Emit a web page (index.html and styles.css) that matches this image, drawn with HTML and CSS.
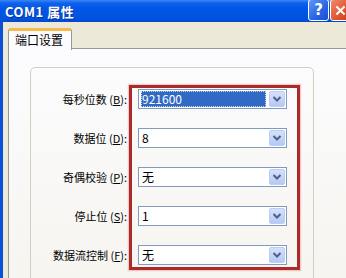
FILE: index.html
```
<!DOCTYPE html>
<html lang="zh-CN">
<head>
    <meta charset="UTF-8">
    <meta name="viewport" content="width=device-width, initial-scale=1.0">
    <title>COM1 属性</title>
    <link rel="stylesheet" href="styles.css">
</head>
<body>
    <div class="window">
        <!-- Title bar -->
        <div class="titlebar">
            <span class="title">COM1 属性</span>
            <div class="title-buttons">
                <span class="tbtn help">?</span>
                <span class="tbtn close">
                    <svg width="21" height="21" viewBox="0 0 21 21"><path d="M6 6 L15 15 M15 6 L6 15" stroke="#fff" stroke-width="2.2"/></svg>
                </span>
            </div>
        </div>

        <!-- Dialog body -->
        <div class="dlg">
            <div class="tabs">
                <div class="tab">端口设置</div>
            </div>
            <div class="panel">
                <div class="group">
                    <div class="row">
                        <label>每秒位数 (<u>B</u>):</label>
                        <div class="select focused">
                            <span class="value"><span class="sel">921600</span></span>
                            <span class="drop"><svg width="10" height="8" viewBox="0 0 10 8"><path d="M1.5 2 L5 5.5 L8.5 2" fill="none" stroke="#4d6185" stroke-width="2"/></svg></span>
                        </div>
                    </div>
                    <div class="row">
                        <label>数据位 (<u>D</u>):</label>
                        <div class="select">
                            <span class="value">8</span>
                            <span class="drop"><svg width="10" height="8" viewBox="0 0 10 8"><path d="M1.5 2 L5 5.5 L8.5 2" fill="none" stroke="#4d6185" stroke-width="2"/></svg></span>
                        </div>
                    </div>
                    <div class="row">
                        <label>奇偶校验 (<u>P</u>):</label>
                        <div class="select">
                            <span class="value">无</span>
                            <span class="drop"><svg width="10" height="8" viewBox="0 0 10 8"><path d="M1.5 2 L5 5.5 L8.5 2" fill="none" stroke="#4d6185" stroke-width="2"/></svg></span>
                        </div>
                    </div>
                    <div class="row">
                        <label>停止位 (<u>S</u>):</label>
                        <div class="select">
                            <span class="value">1</span>
                            <span class="drop"><svg width="10" height="8" viewBox="0 0 10 8"><path d="M1.5 2 L5 5.5 L8.5 2" fill="none" stroke="#4d6185" stroke-width="2"/></svg></span>
                        </div>
                    </div>
                    <div class="row">
                        <label>数据流控制 (<u>F</u>):</label>
                        <div class="select">
                            <span class="value">无</span>
                            <span class="drop"><svg width="10" height="8" viewBox="0 0 10 8"><path d="M1.5 2 L5 5.5 L8.5 2" fill="none" stroke="#4d6185" stroke-width="2"/></svg></span>
                        </div>
                    </div>
                </div>
            </div>
        </div>
    </div>

    <!-- Red annotation box -->
    <div class="highlight"></div>
</body>
</html>
```

FILE: styles.css
```
* {
    margin: 0;
    padding: 0;
    box-sizing: border-box;
}

body {
    width: 346px;
    height: 278px;
    overflow: hidden;
    background-color: #ece9d8;
    font-family: 'Noto Sans CJK SC', sans-serif;
    font-size: 12px;
    color: #000;
    position: relative;
}

.window {
    height: 278px;
    display: flex;
    flex-direction: column;
    overflow: hidden;
}

/* Title bar */
.titlebar {
    height: 22px;
    flex-shrink: 0;
    display: flex;
    align-items: center;
    justify-content: space-between;
    background: linear-gradient(#3d86f6 0, #0f62ea 3px, #0056e6 40%, #0053e0 85%, #0746c8 100%);
}

.title {
    color: #fff;
    font-weight: bold;
    font-size: 13px;
    padding-left: 5px;
    letter-spacing: 0.5px;
    text-shadow: 1px 1px 0 #0a2f9a;
}

.title-buttons {
    display: flex;
    gap: 1px;
    align-self: flex-start;
    margin-top: -1px;
    margin-right: -5px;
}

.tbtn {
    width: 21px;
    height: 22px;
    border: 1px solid #fff;
    border-radius: 3px;
    display: flex;
    align-items: center;
    justify-content: center;
    color: #fff;
    font-weight: bold;
    font-size: 15px;
    font-family: 'DejaVu Sans', sans-serif;
}

.help {
    background: linear-gradient(135deg, #5e97f8, #2a63e4 60%, #1c50d0);
}

.close {
    background: linear-gradient(135deg, #f08a6c, #e0552e 60%, #c7401f);
}

/* Dialog body */
.dlg {
    flex: 1;
    border-left: 3px solid #0b4fd9;
    padding: 6px 0 0 5px;
    display: flex;
    flex-direction: column;
    overflow: hidden;
}

.tabs {
    display: flex;
    height: 21px;
    position: relative;
    z-index: 1;
    margin-bottom: -1px;
}

.tab {
    width: 64px;
    height: 22px;
    border: 1px solid #919b9c;
    border-top: 3px solid #f6b94a;
    border-bottom: none;
    border-radius: 3px 3px 0 0;
    background-color: #fcfcfe;
    padding-left: 6px;
    line-height: 17px;
}

.panel {
    flex: 1;
    width: 400px;
    border: 1px solid #919b9c;
    border-bottom: none;
    background: linear-gradient(#fcfcfe, #f6f5f0);
    padding: 18px 0 0 21px;
    overflow: hidden;
}

.group {
    width: 284px;
    height: 260px;
    border: 1px solid #d0d0bf;
    border-radius: 5px;
    padding-top: 21px;
    display: flex;
    flex-direction: column;
    gap: 19px;
}

.row {
    display: grid;
    grid-template-columns: 96px 149px;
    column-gap: 11px;
    align-items: center;
    height: 20px;
}

.row label {
    text-align: right;
    font-size: 11px;
    white-space: nowrap;
}

.select {
    height: 20px;
    border: 1px solid #7f9db9;
    background-color: #fff;
    display: flex;
    align-items: center;
    padding: 1px;
}

.value {
    flex: 1;
    padding-left: 2px;
    font-size: 12px;
    line-height: 16px;
}

.focused .value {
    padding-left: 1px;
    padding-right: 3px;
}

.sel {
    display: block;
    height: 16px;
    background-color: #316ac5;
    color: #fff;
    outline: 1px dotted #c8d8f0;
    outline-offset: -1px;
    padding-left: 1px;
}

.drop {
    width: 16px;
    height: 16px;
    border: 1px solid #b9cdf7;
    border-radius: 2px;
    background: linear-gradient(#d5e1fb, #b6c9f4);
    display: flex;
    align-items: center;
    justify-content: center;
}

/* Red annotation */
.highlight {
    position: absolute;
    left: 129px;
    top: 85px;
    width: 171px;
    height: 185px;
    border: 3px solid #ab2a2a;
    box-shadow: 0 0 1px 1px rgba(240, 150, 150, 0.5);
}
```
